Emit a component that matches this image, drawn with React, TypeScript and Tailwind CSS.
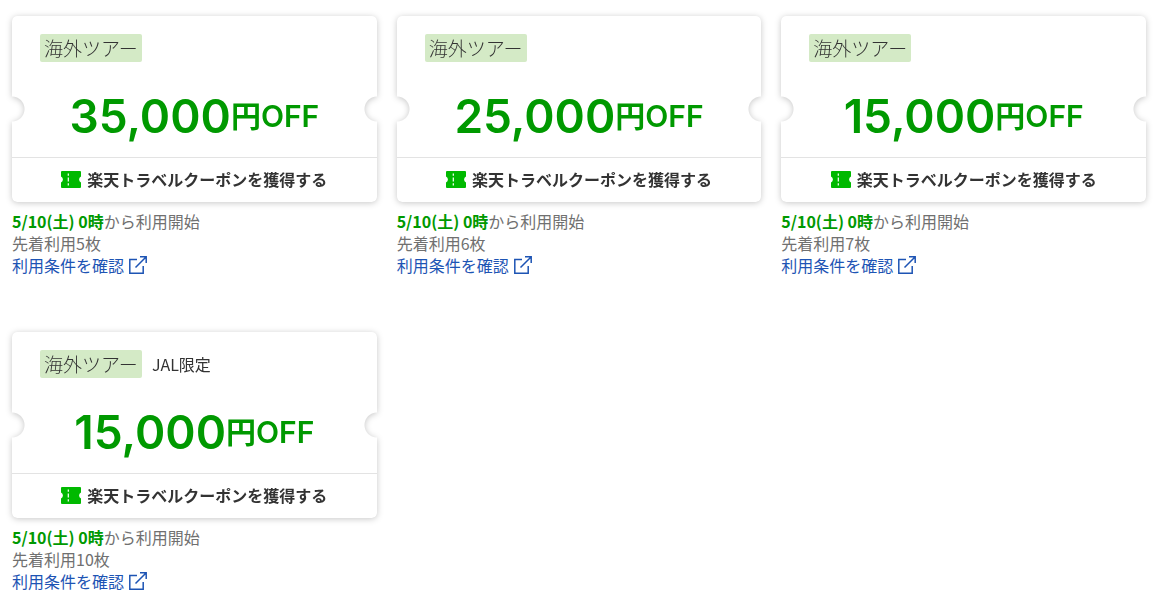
type Coupon = {
  id: number;
  tag: string;
  note?: string;
  amount: string;
  start: string;
  limit: string;
};

const COUPONS: Coupon[] = [
  { id: 1, tag: "海外ツアー", amount: "35,000", start: "5/10(土) 0時", limit: "先着利用5枚" },
  { id: 2, tag: "海外ツアー", amount: "25,000", start: "5/10(土) 0時", limit: "先着利用6枚" },
  { id: 3, tag: "海外ツアー", amount: "15,000", start: "5/10(土) 0時", limit: "先着利用7枚" },
  {
    id: 4,
    tag: "海外ツアー",
    note: "JAL限定",
    amount: "15,000",
    start: "5/10(土) 0時",
    limit: "先着利用10枚",
  },
];

function TicketIcon() {
  return (
    <svg viewBox="0 0 20 17" className="h-[17px] w-5 shrink-0" aria-hidden>
      <path
        d="M1 0h18a1 1 0 0 1 1 1v4.5a3.3 3.3 0 0 0 0 6V16a1 1 0 0 1-1 1H1a1 1 0 0 1-1-1v-4.5a3.3 3.3 0 0 0 0-6V1a1 1 0 0 1 1-1z"
        fill="#00b900"
      />
      <path d="M7.3 2.4v2.4M7.3 6.4v4.2M7.3 12.2v2.4" stroke="#fff" strokeWidth="1.2" />
    </svg>
  );
}

function ExternalIcon() {
  return (
    <svg
      viewBox="0 0 20 20"
      className="h-5 w-5 shrink-0"
      fill="none"
      stroke="currentColor"
      strokeWidth="1.5"
      aria-hidden
    >
      <path d="M9 4.5H1.8v13.7h13.4V11" />
      <path d="M12 1.8h6.2V8M18 2L7.5 12.5" />
    </svg>
  );
}

function CouponCard({ coupon }: { coupon: Coupon }) {
  return (
    <li>
      {/* the shadow sits on the wrapper so that it follows the cut-out notches */}
      <div className="drop-shadow-[0_1px_3px_rgba(0,0,0,0.22)]">
        <div className="rounded-[5px] bg-white [mask-composite:intersect] [mask-image:radial-gradient(circle_at_0_93px,transparent_12px,black_13px),radial-gradient(circle_at_100%_93px,transparent_12px,black_13px)]">
          <div className="flex h-[141px] flex-col px-7 pt-[18px]">
            <div className="flex items-center gap-2.5">
              <span className="rounded-xs bg-[#d4eac6] px-1 text-[19px] leading-7 font-light text-[#333]">
                {coupon.tag}
              </span>
              {coupon.note && <span className="text-base leading-7 text-[#333]">{coupon.note}</span>}
            </div>
            <p className="mt-6 flex items-center justify-center font-['Inter','Noto_Sans_CJK_JP',sans-serif] text-[46px] leading-[60px] font-semibold whitespace-nowrap text-[#009900]">
              {coupon.amount}
              <span className="text-[30px]">円OFF</span>
            </p>
          </div>
          <button
            type="button"
            className="flex h-[45px] w-full cursor-pointer items-center justify-center gap-1.5 border-t border-[#e3e3e3] pb-0.5 text-base font-bold text-[#333]"
          >
            <TicketIcon />
            楽天トラベルクーポンを獲得する
          </button>
        </div>
      </div>
      <div className="mt-2 text-base leading-[22px] text-[#707070]">
        <p>
          <strong className="font-bold text-[#009900]">{coupon.start}</strong>
          から利用開始
        </p>
        <p>{coupon.limit}</p>
        <a href="#terms" className="inline-flex items-center gap-1 text-[#1d54b4]">
          利用条件を確認
          <ExternalIcon />
        </a>
      </div>
    </li>
  );
}

export default function App() {
  return (
    <main
      lang="ja"
      className="min-h-screen bg-white pt-4 pr-3.5 pl-3 font-['Noto_Sans_CJK_JP',sans-serif]"
    >
      <ul className="grid grid-cols-3 gap-x-5 gap-y-14">
        {COUPONS.map((coupon) => (
          <CouponCard key={coupon.id} coupon={coupon} />
        ))}
      </ul>
    </main>
  );
}
